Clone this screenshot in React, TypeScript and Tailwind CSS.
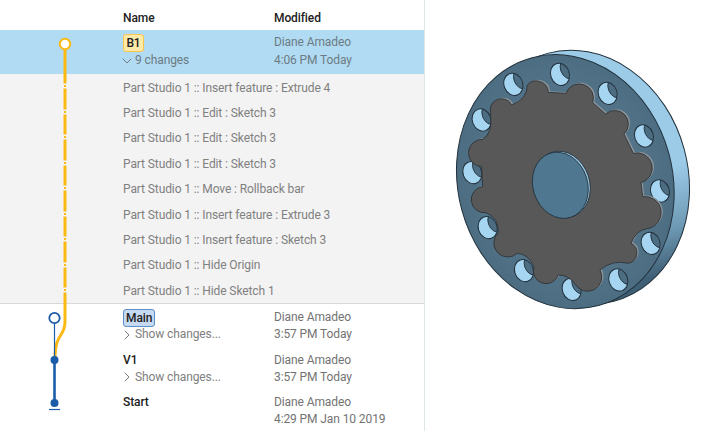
import { ChevronDown, ChevronRight } from "lucide-react";

const changes = [
  "Part Studio 1 :: Insert feature : Extrude 4",
  "Part Studio 1 :: Edit : Sketch 3",
  "Part Studio 1 :: Edit : Sketch 3",
  "Part Studio 1 :: Edit : Sketch 3",
  "Part Studio 1 :: Move : Rollback bar",
  "Part Studio 1 :: Insert feature : Extrude 3",
  "Part Studio 1 :: Insert feature : Sketch 3",
  "Part Studio 1 :: Hide Origin",
  "Part Studio 1 :: Hide Sketch 1",
];

const tickYs = [86, 112, 137, 163, 188, 214, 239, 265, 290];

const holes = [
  [360, 43], [220, 73], [503, 100], [125, 180], [612, 228], [97, 338],
  [660, 393], [143, 503], [632, 550], [252, 632], [535, 660], [395, 688],
];

const gearPath =
  "M325 97 L378 100 A40 40 0 0 1 458 128 L497 162 A36 36 0 0 1 552 222 L580 280 A40 40 0 0 1 603 368 L608 410 A44 44 0 0 1 622 506 Q588 510 573 550 A32 32 0 0 1 565 610 Q518 598 480 630 A38 38 0 0 1 405 672 Q385 645 355 645 A38 38 0 0 1 282 620 Q265 582 232 580 A34 34 0 0 1 175 518 Q178 475 138 458 A32 32 0 0 1 128 380 L125 320 A34 34 0 0 1 128 238 Q158 222 152 160 A34 34 0 0 1 215 135 Q262 118 262 75 A36 36 0 0 1 325 97 Z";

function Graph() {
  return (
    <svg className="absolute left-0 top-0" width="123" height="431" viewBox="0 0 123 431" fill="none">
      <path d="M65 44V322C65 337 55 333 55 358" stroke="#fdb913" strokeWidth="3" />
      {tickYs.map((y) => (
        <g key={y}>
          <rect x="62" y={y - 2.5} width="6" height="5" fill="#f3f3f3" />
          <rect x="64" y={y - 1} width="2" height="2" fill="#fdb913" />
        </g>
      ))}
      <circle cx="65" cy="44" r="5.2" fill="#fff" stroke="#fdb913" strokeWidth="2" />
      <path d="M54.5 323V360" stroke="#1b5ca8" strokeWidth="1.2" />
      <path d="M54.5 360V403" stroke="#1b5ca8" strokeWidth="2.6" />
      <circle cx="54.5" cy="318" r="5.2" fill="#fff" stroke="#1b5ca8" strokeWidth="1.8" />
      <circle cx="54.5" cy="360" r="4" fill="#1b5ca8" />
      <circle cx="54.5" cy="403" r="4" fill="#1b5ca8" />
      <path d="M49 409.5H60" stroke="#1b5ca8" strokeWidth="1.2" />
    </svg>
  );
}

function Disc() {
  return (
    <svg width="282" height="431" viewBox="425 0 282 431" fill="none">
      <defs>
        <linearGradient id="rim" x1="0" y1="0" x2="0" y2="1">
          <stop offset="0.55" stopColor="#9ccbe8" />
          <stop offset="0.78" stopColor="#6f9ab5" />
          <stop offset="0.95" stopColor="#3f5f75" />
        </linearGradient>
        <radialGradient id="face" cx="0.5" cy="0.5" r="0.55">
          <stop offset="0.6" stopColor="#547589" />
          <stop offset="1" stopColor="#4a6a80" />
        </radialGradient>
        <clipPath id="hole">
          <ellipse rx="28" ry="34" transform="rotate(-20)" />
        </clipPath>
      </defs>
      <g transform="translate(440 60) scale(0.3333)">
        <ellipse cx="422" cy="352" rx="322" ry="385" transform="rotate(-15 422 352)" fill="url(#rim)" stroke="#22313c" strokeWidth="3" />
        <ellipse cx="376" cy="365" rx="322" ry="385" transform="rotate(-15 376 365)" fill="url(#face)" stroke="#22313c" strokeWidth="3" />
        {holes.map(([x, y]) => (
          <g key={`${x}-${y}`} transform={`translate(${x} ${y})`}>
            <ellipse rx="28" ry="34" transform="rotate(-20)" fill="#a6d5f2" />
            <g clipPath="url(#hole)">
              <ellipse cx="34" cy="-8" rx="28" ry="34" transform="rotate(-20)" fill="#4c6c81" stroke="#22313c" strokeWidth="2.5" />
            </g>
            <ellipse rx="28" ry="34" transform="rotate(-20)" stroke="#22313c" strokeWidth="3" />
          </g>
        ))}
        <path d={gearPath} transform="translate(5 -3)" fill="#8c9499" />
        <path d={gearPath} fill="#585858" stroke="#2b3034" strokeWidth="2.5" />
        <ellipse cx="367" cy="373" rx="82" ry="101" transform="rotate(-18 367 373)" fill="#9cc8e2" stroke="#22313c" strokeWidth="2.5" />
        <ellipse cx="361" cy="376" rx="82" ry="101" transform="rotate(-18 361 376)" fill="#4f7790" stroke="#22313c" strokeWidth="2.5" />
      </g>
    </svg>
  );
}

function Row({ name, who = "Diane Amadeo", when, sub, badge }: {
  name: string;
  who?: string;
  when: string;
  sub?: string;
  badge?: string;
}) {
  return (
    <div className="grid grid-cols-[123px_151px_1fr] h-[42.5px] leading-[17px]">
      <div />
      <div>
        <div className="h-[17px]">
          {badge ? (
            <span className={`inline-block px-[2px] h-[18px] rounded-[3px] border text-[#222] font-medium ${badge}`}>
              {name}
            </span>
          ) : (
            <span className="text-[#222] font-medium">{name}</span>
          )}
        </div>
        {sub && (
          <div className="flex items-center text-[#808080]">
            <ChevronRight size={16} strokeWidth={1.5} className="-ml-[4px] shrink-0" />
            {sub}
          </div>
        )}
      </div>
      <div className="text-[#737373]">
        <div>{who}</div>
        <div>{when}</div>
      </div>
    </div>
  );
}

export default function App() {
  return (
    <div className="flex w-[707px] h-[431px] bg-white overflow-hidden text-[12px] tracking-[-0.1px] font-['Roboto',sans-serif]">
      <div className="relative w-[425px] h-full border-r border-[#dfe6ea]">
        <div className="grid grid-cols-[123px_151px_1fr] h-[30px] pt-[6px] items-center text-[#222] font-medium">
          <div />
          <div>Name</div>
          <div>Modified</div>
        </div>
        <div className="grid grid-cols-[123px_151px_1fr] h-[44px] bg-[#b0dbf3] pt-[4px] leading-[17px]">
          <div />
          <div>
            <div className="h-[18px]">
              <span className="inline-block w-[21px] text-center h-[18px] rounded-[3px] border border-[#fcc64b] bg-[#fde9a8] text-[#222] font-medium">
                B1
              </span>
            </div>
            <div className="flex items-center text-[#6d7b84]">
              <ChevronDown size={16} strokeWidth={1.5} className="-ml-[4px] shrink-0" />
              9 changes
            </div>
          </div>
          <div className="text-[#6d7b84]">
            <div className="h-[18px]">Diane Amadeo</div>
            <div>4:06 PM Today</div>
          </div>
        </div>
        <div className="h-[230px] bg-[#f3f3f3] border-b border-[#d8d8d8] pt-[1px]">
          {changes.map((c, i) => (
            <div key={i} className="h-[25.4px] pl-[123px] flex items-center text-[#808080]">
              {c}
            </div>
          ))}
        </div>
        <div className="pt-[5px]">
          <Row name="Main" when="3:57 PM Today" sub="Show changes..." badge="border-[#5f8fc9] bg-[#c5d9f0]" />
          <Row name="V1" when="3:57 PM Today" sub="Show changes..." />
          <Row name="Start" when="4:29 PM Jan 10 2019" />
        </div>
        <Graph />
      </div>
      <Disc />
    </div>
  );
}
